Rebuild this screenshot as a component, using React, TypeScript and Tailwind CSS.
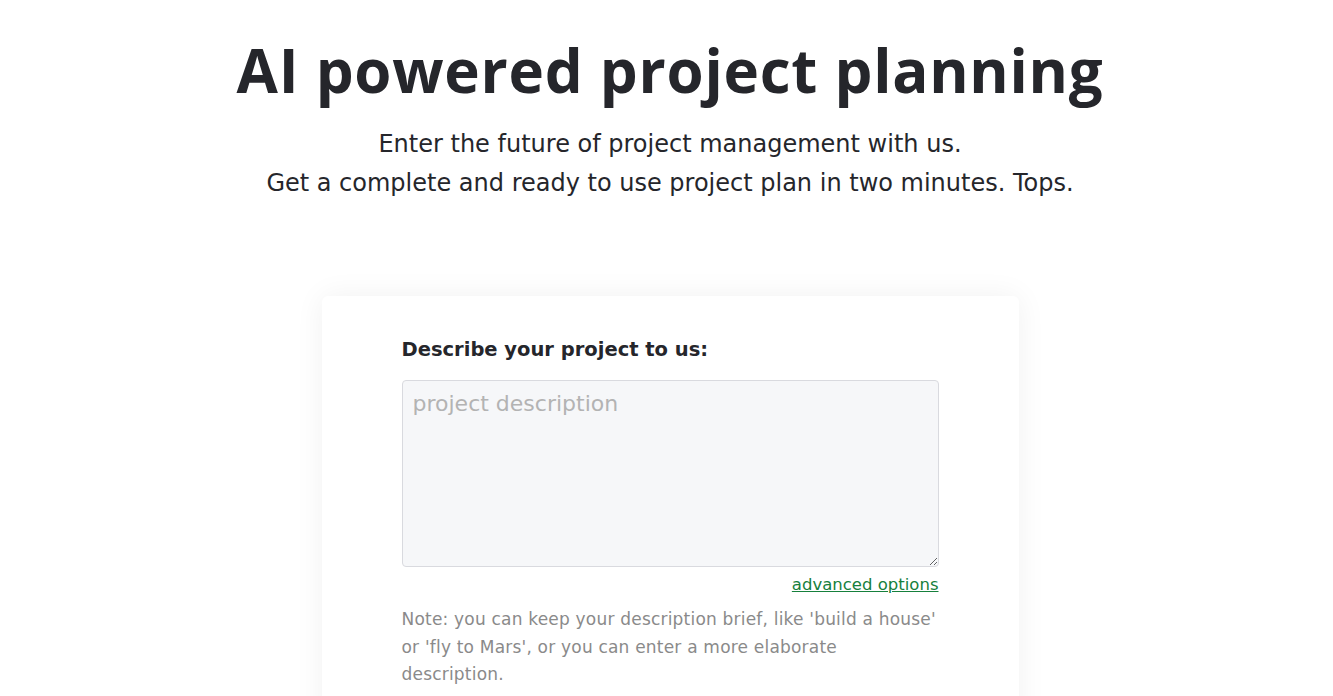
export default function App() {
  return (
    <div className="min-h-screen bg-white pl-[7px] font-['DejaVu_Sans',sans-serif] text-[#25262b]">
      <header className="flex flex-col items-center pt-[34px]">
        <h1 className="font-['Open_Sans',sans-serif] text-[60px] font-bold leading-[72px] tracking-[0.75px]">
          AI powered project planning
        </h1>
        <p className="mt-[19px] text-center text-[24px] leading-[39px]">
          Enter the future of project management with us.
          <br />
          Get a complete and ready to use project plan in two minutes. Tops.
        </p>
      </header>

      <main className="mt-[93px] flex justify-center">
        <div className="w-[697px] rounded-[6px] bg-white px-[80px] pt-[40px] pb-10 shadow-[0_0_30px_rgba(0,0,0,0.06)]">
          <label className="block text-[19.5px] font-bold leading-[28px] text-[#25262b]">Describe your project to us:</label>
          <textarea
            placeholder="project description"
            className="mt-[16px] block h-[187px] w-full rounded-[4px] border border-[#d9dadf] bg-[#f6f7f9] px-[10px] py-[6px] text-[22px] placeholder:text-[#b3b3b3] outline-none"
          />
          <div className="mt-[7px] flex justify-end">
            <a href="#" className="text-[16.5px] leading-[22px] text-[#16803c] underline">advanced options</a>
          </div>
          <p className="mt-[10px] text-[17px] leading-[27.5px] tracking-[0.2px] text-[#8a8a8a]">
            Note: you can keep your description brief, like 'build a house' or 'fly to Mars', or you can enter a more elaborate description.
          </p>
        </div>
      </main>
    </div>
  );
}
